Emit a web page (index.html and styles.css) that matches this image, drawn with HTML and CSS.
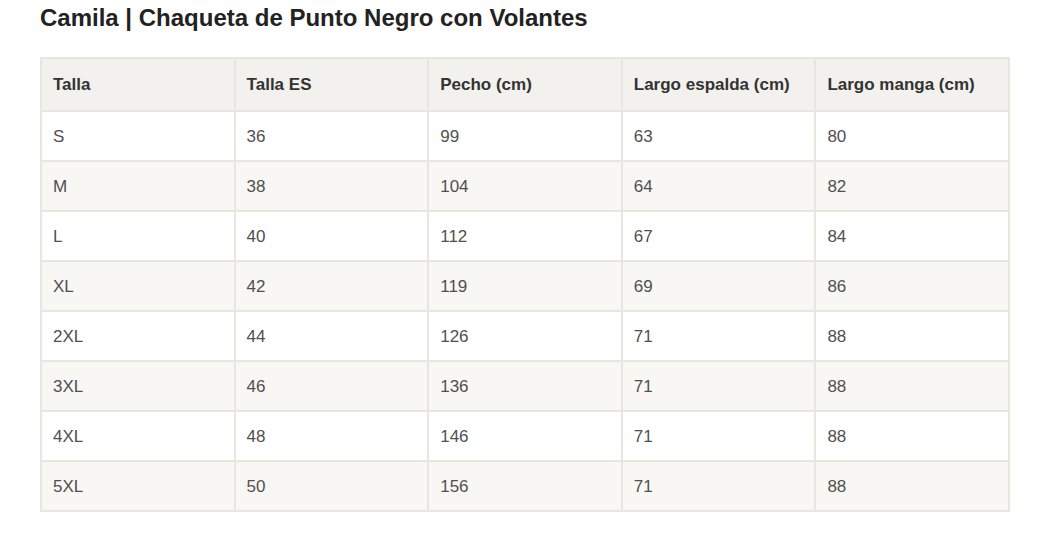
FILE: index.html
```html
<!DOCTYPE html>
<html lang="es">
<head>
    <meta charset="UTF-8">
    <title>Camila | Guía de tallas</title>
    <link rel="stylesheet" href="styles.css">
</head>
<body>
    <div class="size-guide">
        <h2>Camila | Chaqueta de Punto Negro con Volantes</h2>
        <table class="size-table">
            <thead>
                <tr>
                    <th>Talla</th>
                    <th>Talla ES</th>
                    <th>Pecho (cm)</th>
                    <th>Largo espalda (cm)</th>
                    <th>Largo manga (cm)</th>
                </tr>
            </thead>
            <tbody>
                <tr><td>S</td><td>36</td><td>99</td><td>63</td><td>80</td></tr>
                <tr><td>M</td><td>38</td><td>104</td><td>64</td><td>82</td></tr>
                <tr><td>L</td><td>40</td><td>112</td><td>67</td><td>84</td></tr>
                <tr><td>XL</td><td>42</td><td>119</td><td>69</td><td>86</td></tr>
                <tr><td>2XL</td><td>44</td><td>126</td><td>71</td><td>88</td></tr>
                <tr><td>3XL</td><td>46</td><td>136</td><td>71</td><td>88</td></tr>
                <tr><td>4XL</td><td>48</td><td>146</td><td>71</td><td>88</td></tr>
                <tr><td>5XL</td><td>50</td><td>156</td><td>71</td><td>88</td></tr>
            </tbody>
        </table>
    </div>
</body>
</html>
```

FILE: styles.css
```css
body {
    margin: 0;
    background: #fff;
    font-family: "Liberation Sans", Arial, sans-serif;
    color: #444;
}
.size-guide {
    padding: 4px 40px 40px;
}
.size-guide h2 {
    margin: 0 0 25px;
    font-size: 24px;
    line-height: 28px;
    font-weight: bold;
    color: #222;
}
.size-table {
    width: 970px;
    border-collapse: collapse;
    table-layout: fixed;
    font-size: 17px;
}
.size-table th,
.size-table td {
    border: 2px solid #e8e6e1;
    padding: 0 11px;
    text-align: left;
}
.size-table th {
    height: 51px;
    background: #f2f1ed;
    color: #333;
    font-weight: bold;
}
.size-table td {
    height: 46px;
    padding-top: 2px;
    color: #505050;
}
.size-table tbody tr:nth-child(even) td {
    background: #f8f7f3;
}
```
